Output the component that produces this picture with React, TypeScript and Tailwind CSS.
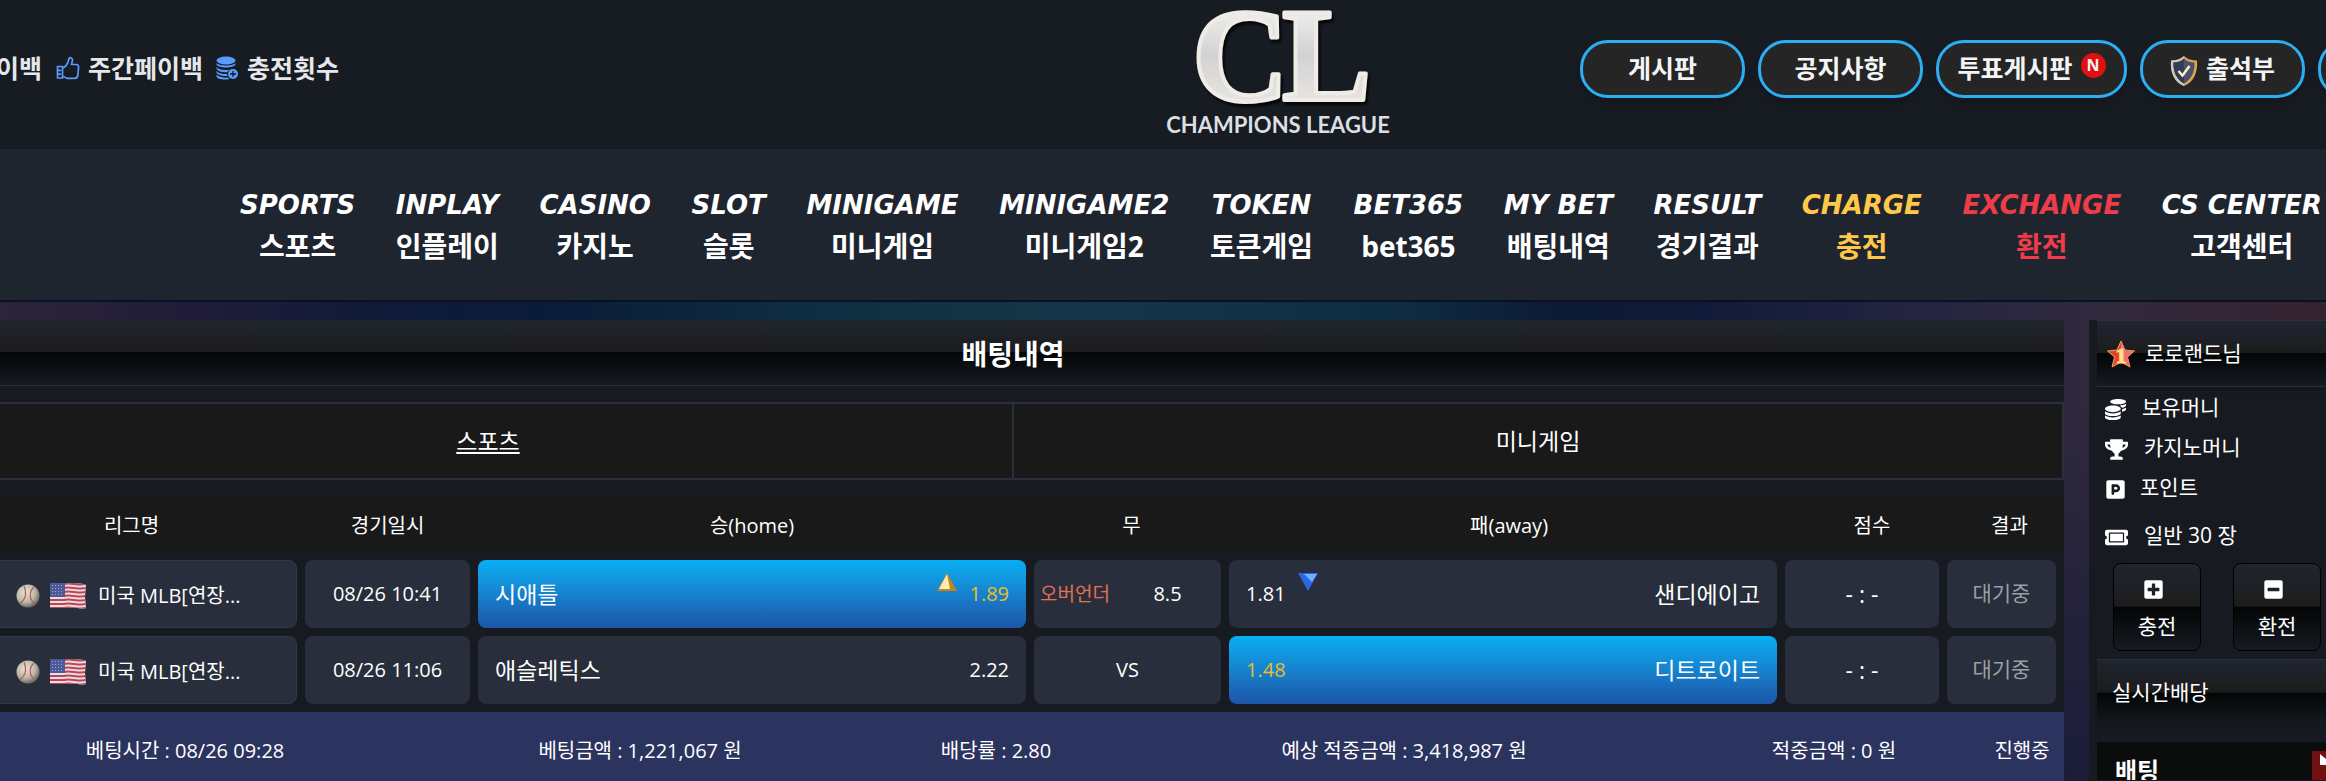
import { FaCoins, FaMinusSquare, FaParking, FaPlusSquare, FaTicketAlt, FaTrophy } from 'react-icons/fa';
import clsx from 'clsx';

interface MenuItem {
  en: string;
  ko: string;
  color?: string;
}

const menu: MenuItem[] = [
  { en: 'SPORTS', ko: '스포츠' },
  { en: 'INPLAY', ko: '인플레이' },
  { en: 'CASINO', ko: '카지노' },
  { en: 'SLOT', ko: '슬롯' },
  { en: 'MINIGAME', ko: '미니게임' },
  { en: 'MINIGAME2', ko: '미니게임2' },
  { en: 'TOKEN', ko: '토큰게임' },
  { en: 'BET365', ko: 'bet365' },
  { en: 'MY BET', ko: '배팅내역' },
  { en: 'RESULT', ko: '경기결과' },
  { en: 'CHARGE', ko: '충전', color: 'text-[#ffc84a]' },
  { en: 'EXCHANGE', ko: '환전', color: 'text-[#ee3d48]' },
  { en: 'CS CENTER', ko: '고객센터' },
];

interface Bet {
  league: string;
  date: string;
  home: string;
  homeOdds: string;
  away: string;
  awayOdds: string;
  line?: string;
  pick: 'home' | 'away';
}

const bets: Bet[] = [
  { league: '미국 MLB[연장...', date: '08/26 10:41', home: '시애틀', homeOdds: '1.89', away: '샌디에이고', awayOdds: '1.81', line: '8.5', pick: 'home' },
  { league: '미국 MLB[연장...', date: '08/26 11:06', home: '애슬레틱스', homeOdds: '2.22', away: '디트로이트', awayOdds: '1.48', pick: 'away' },
];

const columns = [
  { label: '리그명', th: '' },
  { label: '경기일시', th: '' },
  { label: '승(home)', th: '' },
  { label: '무', th: 'pl-2' },
  { label: '패(away)', th: 'pl-3' },
  { label: '점수', th: 'pl-5' },
  { label: '결과', th: 'pl-3' },
];

const glossy = 'bg-[linear-gradient(#1f2530,#1c1c1c_49%,#030506_50%,#161b21)]';
const picked = 'bg-linear-to-b from-[#05b0f4] to-[#1b55a8]';

function ThumbIcon() {
  return (
    <svg viewBox="0 0 24 24" className="size-6" fill="none" stroke="#5b9bff" strokeWidth="1.7" strokeLinejoin="round">
      <path d="M7 12 C9 11 11 9 12 6 L13 2.500 C14 1 16.800 1.800 16.500 4.500 L15.500 8.500 H20 C22 8.500 23 10 22.500 12 L21.800 19.500 C21.500 21.300 20.500 22.300 18.500 22.300 H11 L7 20.500" />
      <path d="M1.500 10.500 H6.500 V22 H1.500 Z M1.500 14.300 H5 M1.500 18.200 H5" />
    </svg>
  );
}

function CoinStackIcon() {
  return (
    <svg viewBox="0 0 24 24" className="size-6" fill="#5b9bff">
      <ellipse cx="11" cy="4.500" rx="9.500" ry="4" />
      <path d="M1.500 6.800 C3 10.500 19 10.500 20.500 6.800 V8.500 C19 12.500 3 12.500 1.500 8.500 Z" />
      <path d="M1.500 10.800 C3 14.500 13 14.700 17 13 C14.500 13.300 12.800 14.800 12.300 16.300 C8 16.600 2.500 15.500 1.500 12.500 Z" />
      <path d="M1.500 14.800 C3 17.500 8 18.300 12 17.900 L12.400 20 C7 20.300 2.500 19 1.500 16.500 Z" />
      <path d="M1.500 18.600 C3 21 8 22 13 21.500 L14.500 23 C9 24.200 2.500 23.500 1.500 20.500 Z" />
      <circle cx="18" cy="18" r="5" />
      <path d="M18 15 V21 M15 18 H21" stroke="#171b22" strokeWidth="1.300" />
    </svg>
  );
}

function ShieldIcon() {
  return (
    <svg viewBox="0 0 28 32" className="mt-1 h-8 w-7">
      <path d="M14 1 C17 4 22 5.500 27 5.500 C28 17 24 27 14 31 C4 27 0 17 1 5.500 C6 5.500 11 4 14 1Z" fill="#d9a64e" />
      <path d="M14 1 C11 4 6 5.500 1 5.500 C0 17 4 27 14 31 Z" fill="#cfc9bd" />
      <path d="M14 3.500 C17 6.500 21 7.500 24.500 7.500 C25 17 21 25 14 28.500 C7 25 3 17 3.500 7.500 C7 7.500 11 6.500 14 3.500Z" fill="#4b5270" />
      <path d="M14 3.500 C11 6.500 7 7.500 3.500 7.500 C3 17 7 25 14 28.500 Z" fill="#343b5a" />
      <path d="M8.500 16 L12.500 20.500 L19.500 11" fill="none" stroke="#fff1c4" strokeWidth="2.400" />
    </svg>
  );
}

function StarIcon() {
  return (
    <svg viewBox="0 0 28 28" className="size-7">
      <path d="M14 1 L18 10 L27.500 11 L20.500 17 L23 27 L14 22 L5 27 L7.500 17 L0.500 11 L10 10 Z" fill="#e2452b" stroke="#f2a25a" strokeWidth="1" />
      <path d="M14 1 L18 10 L27.500 11 L20.500 17 L23 27 L14 22 Z" fill="#f0736f" />
      <text x="14" y="23" textAnchor="middle" fill="#ffe089" stroke="#ffe089" strokeWidth="1" fontFamily="Liberation Serif, serif" fontSize="22" fontWeight="700">1</text>
    </svg>
  );
}

function BaseballIcon() {
  return (
    <svg viewBox="0 0 24 24" className="size-6 shrink-0">
      <defs>
        <radialGradient id="ball" cx="0.4" cy="0.35" r="0.7">
          <stop offset="0" stopColor="#e8e2d8" />
          <stop offset="0.6" stopColor="#bdb5aa" />
          <stop offset="1" stopColor="#5e5852" />
        </radialGradient>
      </defs>
      <circle cx="12" cy="12" r="11.500" fill="url(#ball)" />
      <path d="M8 2 C11 9 10 15 4 19.500 M18 3 C12.500 8 13 16 19.500 20" fill="none" stroke="#b0604e" strokeWidth="1.100" />
    </svg>
  );
}

function UsaFlag() {
  const stripes = [0, 2, 4, 6, 8, 10, 12];
  return (
    <svg viewBox="0 0 36 26" className="h-[26px] w-9 shrink-0">
      <defs>
        <clipPath id="wave">
          <path d="M0 0 H17 C23 2 29 -1 36 2 L35 14 L36 25 C30 27 26 23 18 25 H0 Z" />
        </clipPath>
      </defs>
      <g clipPath="url(#wave)">
        <rect width="36" height="26" fill="#e6dfe4" />
        {stripes.map((i) => (
          <path key={i} d={`M0 ${i * 2 + 1} H14 C20 ${i * 2 - 1} 28 ${i * 2 + 3} 36 ${i * 2 + 1}`} fill="none" stroke="#c14453" strokeWidth="2" />
        ))}
        <rect width="15" height="14" fill="#4c5a99" />
        <path d="M2 2.500 H14 M2 5.500 H14 M2 8.500 H14 M2 11.500 H14" stroke="#9aa3cc" strokeDasharray="1 2" />
      </g>
    </svg>
  );
}

function Logo() {
  return (
    <a href="#" aria-label="Champions League" className="shrink-0">
      <svg viewBox="0 0 230 140" className="h-[140px] w-[230px]">
        <defs>
          <linearGradient id="silver" x1="0" y1="0" x2="0" y2="1">
            <stop offset="0" stopColor="#ffffff" />
            <stop offset="0.5" stopColor="#d3d2d2" />
            <stop offset="1" stopColor="#f3f1ee" />
          </linearGradient>
        </defs>
        <g
          className="drop-shadow-[2px_3px_1px_#050608]"
          fill="url(#silver)"
          stroke="#efece6"
          strokeWidth="4"
          strokeLinejoin="round"
          fontFamily="Liberation Serif, serif"
          fontSize="134"
        >
          <text x="29" y="101">C</text>
          <text x="119" y="100">L</text>
        </g>
        <text x="115" y="133" textAnchor="middle" fill="#dcdfe2" fontFamily="Lato, sans-serif" fontSize="22" fontWeight="700">CHAMPIONS LEAGUE</text>
      </svg>
    </a>
  );
}

const pill = 'flex h-[58px] shrink-0 items-center justify-center gap-2 rounded-[28px] border-3 border-[#2caef5] bg-[#252525] text-[25px] text-gray-100 shadow-lg';

function Header() {
  return (
    <header className="flex h-[149px] items-start overflow-hidden bg-[#171b22] font-bold text-gray-200">
      <div className="w-1/2 pt-[50px]">
        <div className="-ml-1 flex items-center text-[25px] leading-9 whitespace-nowrap">
          <a href="#" className="mr-[14px]">이백</a>
          <a href="#" className="mr-3 flex items-center gap-2"><ThumbIcon />주간페이백</a>
          <a href="#" className="flex items-center gap-2"><CoinStackIcon />충전횟수</a>
        </div>
      </div>
      <Logo />
      <div className="flex min-w-0 flex-1 gap-[13px] overflow-hidden pt-10 pb-6 pl-[187px]">
        <button className={clsx(pill, 'w-[165px]')}>게시판</button>
        <button className={clsx(pill, 'w-[165px]')}>공지사항</button>
        <button className={clsx(pill, 'w-[191px]')}>
          투표게시판
          <span className="mb-2 flex size-[25px] items-center justify-center rounded-full bg-[#e01010] text-[16px]">N</span>
        </button>
        <button className={clsx(pill, 'w-[165px]')}><ShieldIcon />출석부</button>
        <button aria-label="더보기" className={clsx(pill, 'w-[165px]')} />
      </div>
    </header>
  );
}

function MainMenu() {
  return (
    <nav className="flex h-[153px] items-start justify-between border-b-2 border-[#0b1022] bg-[#1f252f] pt-[38px] pr-1 pl-60 text-center font-bold whitespace-nowrap">
      {menu.map((item) => (
        <a key={item.en} href="#" className={clsx('block', item.color || 'text-white')}>
          <span className="block font-['DejaVu_Sans',sans-serif] text-[26px] leading-9 italic">{item.en}</span>
          <span className="mt-1 block text-[28px] leading-[38px]">{item.ko}</span>
        </a>
      ))}
    </nav>
  );
}

function BetRow({ bet }: { bet: Bet }) {
  const box = 'flex h-[68px] items-center rounded-lg';
  const homePicked = bet.pick === 'home';
  return (
    <tr>
      <td className="py-1 pr-1 pl-2">
        <div className={clsx(box, 'gap-[10px] border border-[#323a45] bg-[#282e3b] pt-1 pl-[45px] text-[20px]')}>
          <BaseballIcon />
          <UsaFlag />
          <span className="ml-[2px]">{bet.league}</span>
        </div>
      </td>
      <td className="p-1">
        <div className={clsx(box, 'justify-center bg-[#282e3b] text-[20px]')}>{bet.date}</div>
      </td>
      <td className="p-1">
        <div className={clsx(box, 'justify-between px-[17px]', homePicked ? picked : 'bg-[#282e3b]')}>
          <span className="text-[23px]">{bet.home}</span>
          <span className={clsx('flex items-center gap-3 text-[20px]', homePicked && 'text-[#eebd22]')}>
            {homePicked && (
              <svg viewBox="0 0 20 18" className="mb-6 h-[18px] w-5">
                <path d="M10 0 L20 18 H0 Z" fill="#c98214" />
                <path d="M10 1 L13 16 H2 Z" fill="#ffe9b5" />
              </svg>
            )}
            {bet.homeOdds}
          </span>
        </div>
      </td>
      <td className="p-1">
        {bet.line ? (
          <div className={clsx(box, 'bg-[#282e3b] pl-[6px]')}>
            <span className="text-[19px] text-[#e2714f]">오버언더</span>
            <span className="flex-1 pl-1 text-center text-[20px]">{bet.line}</span>
          </div>
        ) : (
          <div className={clsx(box, 'justify-center bg-[#282e3b] text-[20px]')}>VS</div>
        )}
      </td>
      <td className="p-1">
        <div className={clsx(box, 'justify-between px-[17px]', homePicked ? 'bg-[#282e3b]' : picked)}>
          <span className={clsx('flex items-center gap-3 text-[20px]', !homePicked && 'text-[#eebd22]')}>
            {bet.awayOdds}
            {homePicked && (
              <svg viewBox="0 0 20 18" className="mb-6 h-[18px] w-5">
                <path d="M0 0 H20 L10 18 Z" fill="#2b66e8" />
                <path d="M6 1 H19 L14 9 Z" fill="#6fb0ff" />
              </svg>
            )}
          </span>
          <span className="text-[23px]">{bet.away}</span>
        </div>
      </td>
      <td className="p-1">
        <div className={clsx(box, 'justify-center bg-[#282e3b] text-[23px]')}>- : -</div>
      </td>
      <td className="py-1 pr-2 pl-1">
        <div className={clsx(box, 'justify-center bg-[#282e3b] text-[21px] text-[#9a9fa6]')}>대기중</div>
      </td>
    </tr>
  );
}

function BetHistory() {
  return (
    <main className="-ml-[38px] min-w-0 flex-1 bg-[#171b21]">
      <h1 className={clsx(glossy, 'h-[66px] border-b border-[#2b303a] text-center text-[28px] leading-[68px] font-bold')}>배팅내역</h1>
      <div className="mt-4 flex h-[78px] border-2 border-[#2a303b] bg-[#191919] text-[23px]">
        <button className="flex-1 border-r-2 border-[#2a303b] underline decoration-2 underline-offset-2">스포츠</button>
        <button className="flex-1">미니게임</button>
      </div>
      <table className="mt-4 w-full table-fixed border-collapse whitespace-nowrap">
        <colgroup>
          <col className="w-[16.13%]" />
          <col className="w-[8.23%]" />
          <col className="w-[26.45%]" />
          <col className="w-[9.28%]" />
          <col className="w-[26.45%]" />
          <col className="w-[7.7%]" />
          <col className="w-[5.76%]" />
        </colgroup>
        <thead>
          <tr className="h-14 bg-[#191919] text-[20px]">
            {columns.map((col) => (
              <th key={col.label} className={clsx('pt-1 pb-0 text-center font-normal', col.th)}>{col.label}</th>
            ))}
          </tr>
        </thead>
        <tbody className="before:block before:h-1">
          {bets.map((bet) => (
            <BetRow key={bet.date} bet={bet} />
          ))}
        </tbody>
      </table>
      <div className="mt-1 grid h-[69px] grid-cols-[446fr_464fr_248fr_568fr_292fr_84fr] items-center bg-[#2b335f] pt-2 text-center text-[20px] whitespace-nowrap">
        <span>베팅시간 : 08/26 09:28</span>
        <span>베팅금액 : 1,221,067 원</span>
        <span>배당률 : 2.80</span>
        <span>예상 적중금액 : 3,418,987 원</span>
        <span>적중금액 : 0 원</span>
        <span>진행중</span>
      </div>
    </main>
  );
}

function Sidebar() {
  const cashButton = 'flex size-[88px] flex-col items-center justify-center gap-3 rounded-lg border border-black pt-1 text-[21px] leading-7';
  return (
    <aside className="ml-[25px] w-[237px] shrink-0 overflow-hidden bg-[#171b21] pl-2 text-[21px] whitespace-nowrap">
      <div className={clsx(glossy, 'flex h-[67px] items-center gap-[10px] border-y border-[#2b303a] pl-[10px] shadow-md')}>
        <StarIcon />
        로로랜드님
      </div>
      <ul className="pl-2 leading-10">
        <li className="flex h-10 items-center gap-4"><FaCoins className="mt-1 size-[21px]" />보유머니</li>
        <li className="flex h-10 items-center gap-4"><FaTrophy className="mt-1 size-[23px]" />카지노머니</li>
        <li className="flex h-10 items-center gap-[14px]"><FaParking className="mt-1 size-[21px]" />포인트</li>
        <li className="mt-2 flex h-10 items-center gap-4"><FaTicketAlt className="mt-1 size-[23px]" />일반 30 장</li>
      </ul>
      <div className="mt-2 flex gap-8 pl-4">
        <button className={clsx(cashButton, glossy)}><FaPlusSquare className="mr-2 size-[21px]" />충전</button>
        <button className={clsx(cashButton, glossy)}><FaMinusSquare className="mr-2 size-[21px]" />환전</button>
      </div>
      <div className={clsx(glossy, 'mt-2 flex h-[67px] items-center border-t border-[#2b303a] pl-[15px] shadow-md')}>실시간배당</div>
      <div className="mt-4 flex h-[38px] justify-between overflow-hidden bg-[#0b0d0c] pt-[9px] pl-[18px]">
        <span className="text-[24px] leading-10 font-bold">배팅</span>
        <button aria-label="폴더" className="h-10 w-[14px] overflow-hidden bg-[#701010]">
          <svg viewBox="0 0 14 40" className="h-10 w-[14px]"><path d="M8 3 L14 8 V14 H8 Z" fill="#fff" /></svg>
        </button>
      </div>
    </aside>
  );
}

export default function App() {
  return (
    <div className="overflow-hidden bg-[#171b22] font-['Open_Sans','Noto_Sans_CJK_KR',sans-serif] text-white">
      <Header />
      <MainMenu />
      <div className="bg-[linear-gradient(transparent_20%,#1b1d38),linear-gradient(90deg,#2d2439,#1f1c38_9%,#0e1a38_17%,#0a1c38_24%,#0f2d40_34%,#153648_46%,#0f2d42_60%,#0c1a35_67%,#101a38_73%,#242440_82%,#30293d_90%,#35222f)] pt-[18px]">
        <div className="flex items-stretch overflow-hidden">
          <BetHistory />
          <Sidebar />
        </div>
      </div>
    </div>
  );
}
